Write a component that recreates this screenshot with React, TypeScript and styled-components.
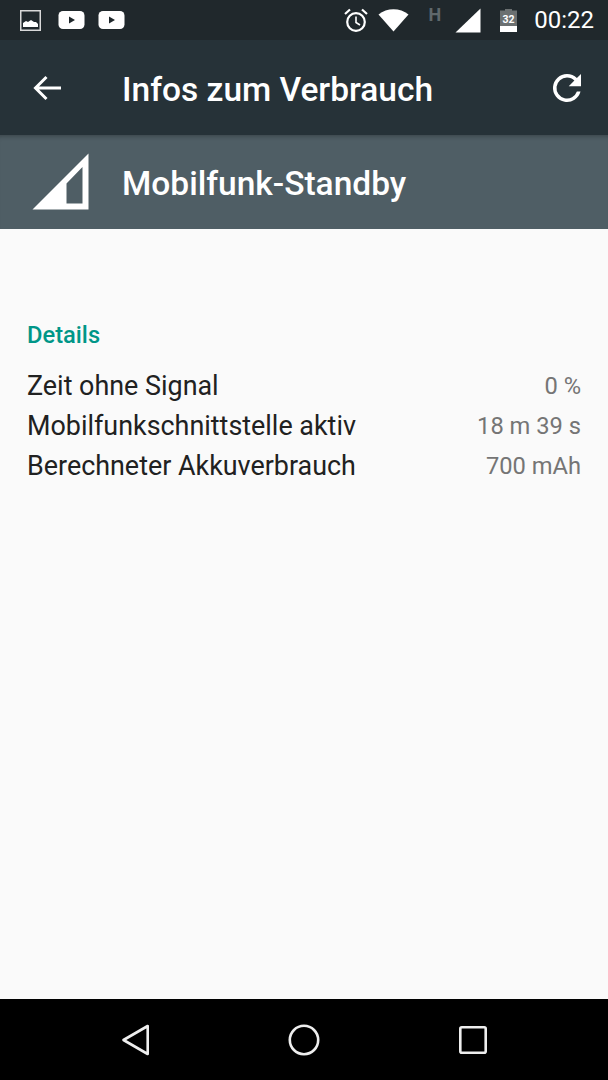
import React from "react";
import styled, { createGlobalStyle } from "styled-components";

const GlobalStyle = createGlobalStyle`
  html, body {
    margin: 0;
    padding: 0;
    background: #000;
  }
  * {
    box-sizing: border-box;
  }
`;

const Screen = styled.div`
  width: 608px;
  height: 1080px;
  display: flex;
  flex-direction: column;
  font-family: Roboto, "Liberation Sans", sans-serif;
  background: #fafafa;
  overflow: hidden;
`;

const StatusBar = styled.div`
  height: 40px;
  flex: none;
  display: flex;
  align-items: center;
  justify-content: space-between;
  padding: 0 14px 0 20px;
  background: #20282c;
`;

const StatusGroup = styled.div`
  display: flex;
  align-items: center;
`;

const StatusTime = styled.span`
  margin-left: 17px;
  font-size: 24px;
  line-height: 40px;
  color: #fff;
`;

const Toolbar = styled.div`
  height: 95px;
  flex: none;
  display: flex;
  align-items: center;
  padding: 0 20px 0 33px;
  background: #263238;
`;

const ToolbarTitle = styled.h1`
  flex: 1;
  margin: 0 0 0 60px;
  padding-top: 3px;
  font-size: 33.5px;
  font-weight: 500;
  color: #fff;
`;

const Header = styled.div`
  height: 94px;
  flex: none;
  display: flex;
  align-items: center;
  padding: 0 0 1px 32px;
  background: #4f5e65;
  box-shadow: inset 0 5px 5px -4px rgba(0, 0, 0, 0.3);
`;

const HeaderTitle = styled.h2`
  margin: 0 0 0 32px;
  padding-top: 4px;
  font-size: 33.5px;
  font-weight: 500;
  color: #fff;
`;

const Content = styled.main`
  flex: 1;
  padding: 92px 27px 0;
  background: #fafafa;
`;

const SectionTitle = styled.h3`
  margin: 0 0 17px;
  font-size: 23.7px;
  line-height: 28px;
  font-weight: 500;
  color: #009688;
`;

const Row = styled.div`
  height: 40px;
  display: flex;
  align-items: center;
  justify-content: space-between;
`;

const RowLabel = styled.span`
  font-size: 26.9px;
  color: #212121;
`;

const RowValue = styled.span`
  font-size: 23.7px;
  color: #757575;
`;

const NavBar = styled.nav`
  height: 81px;
  flex: none;
  display: flex;
  align-items: center;
  padding: 0 121px 0 122px;
  justify-content: space-between;
  background: #000;
`;

const NetworkType = styled.span`
  align-self: flex-start;
  margin: 6px 0 0 20px;
  font-size: 18px;
  line-height: 18px;
  font-weight: 700;
  color: #5f686b;
`;

const rows = [
  { label: "Zeit ohne Signal", value: "0 %" },
  { label: "Mobilfunkschnittstelle aktiv", value: "18 m 39 s" },
  { label: "Berechneter Akkuverbrauch", value: "700 mAh" },
];

const YouTubeIcon = ({ left }: { left: number }) => (
  <svg width="27" height="20" viewBox="0 0 27 20" style={{ marginLeft: left }}>
    <rect x="0.5" y="1" width="26" height="18" rx="4.5" fill="#fff" />
    <path d="M11 6.5v7l6-3.5z" fill="#20282c" />
  </svg>
);

const ImageIcon = () => (
  <svg width="21" height="21" viewBox="0 0 21 21">
    <rect x="0.75" y="0.75" width="19.5" height="19.5" fill="none" stroke="#d8d8d8" strokeWidth="1.5" />
    <path d="M3 17v-4l3-2 2 1 3-2 3 2 2 0 2 2v3z" fill="#fff" />
  </svg>
);

const AlarmIcon = () => (
  <svg width="24" height="26" viewBox="0 0 24 26">
    <circle cx="12" cy="15" r="8.8" fill="none" stroke="#fff" strokeWidth="2.2" />
    <path d="M12 9.5V15.5l4 2.5" fill="none" stroke="#fff" strokeWidth="1.6" />
    <path d="M1 7l5-4.5M23 7l-5-4.5" fill="none" stroke="#fff" strokeWidth="2.2" />
  </svg>
);

const WifiIcon = () => (
  <svg width="31" height="24" viewBox="0 0 31 24" style={{ marginLeft: 10 }}>
    <path d="M0.5 6.5C9 -0.5 22 -0.5 30.5 6.5L15.5 23.5z" fill="#fff" />
  </svg>
);

const SignalIcon = () => (
  <svg width="26" height="25" viewBox="0 0 26 25" style={{ marginLeft: 14 }}>
    <path d="M0.5 24.5L25.5 0.5V24.5z" fill="#fff" />
  </svg>
);

const BatteryIcon = () => (
  <svg width="17" height="24" viewBox="0 0 17 24" style={{ marginLeft: 19 }}>
    <path d="M5 1h7v1.5h5V24H0V2.5h5z" fill="#6b7071" />
    <path d="M0 18h17v6H0z" fill="#fff" />
    <text x="8.5" y="15" textAnchor="middle" fontSize="10.5" fontWeight="700" fontFamily="Roboto, sans-serif" fill="#fff">
      32
    </text>
  </svg>
);

export default function App() {
  return (
    <>
      <GlobalStyle />
      <Screen>
        <StatusBar>
          <StatusGroup>
            <ImageIcon />
            <YouTubeIcon left={17} />
            <YouTubeIcon left={13} />
          </StatusGroup>
          <StatusGroup>
            <AlarmIcon />
            <WifiIcon />
            <NetworkType>H</NetworkType>
            <SignalIcon />
            <BatteryIcon />
            <StatusTime>00:22</StatusTime>
          </StatusGroup>
        </StatusBar>
        <Toolbar>
          <svg width="29" height="26" viewBox="0 0 29 26">
            <path d="M28 13H3M13.5 2L2.5 13l11 11" fill="none" stroke="#fff" strokeWidth="3" />
          </svg>
          <ToolbarTitle>Infos zum Verbrauch</ToolbarTitle>
          <svg width="42" height="42" viewBox="0 0 24 24">
            <path
              d="M17.65 6.35A7.96 7.96 0 0 0 12 4a8 8 0 1 0 7.73 10h-2.08A6 6 0 1 1 12 6c1.66 0 3.14.69 4.22 1.78L13 11h7V4z"
              fill="#fff"
            />
          </svg>
        </Toolbar>
        <Header>
          <svg width="58" height="58" viewBox="0 0 58 58">
            <path fillRule="evenodd" d="M0.5 56.5L56.5 0.5V56.5zM34.5 50.5H50.5V14L34.5 30.5z" fill="#fff" />
          </svg>
          <HeaderTitle>Mobilfunk-Standby</HeaderTitle>
        </Header>
        <Content>
          <SectionTitle>Details</SectionTitle>
          {rows.map((row) => (
            <Row key={row.label}>
              <RowLabel>{row.label}</RowLabel>
              <RowValue>{row.value}</RowValue>
            </Row>
          ))}
        </Content>
        <NavBar>
          <svg width="27" height="32" viewBox="0 0 27 32">
            <path d="M1.5 16L25.7 2V30z" fill="none" stroke="#eee" strokeWidth="2.6" strokeLinejoin="round" />
          </svg>
          <svg width="32" height="32" viewBox="0 0 32 32">
            <circle cx="16" cy="16" r="14.2" fill="none" stroke="#eee" strokeWidth="2.6" />
          </svg>
          <svg width="28" height="28" viewBox="0 0 28 28">
            <rect x="1.3" y="1.3" width="25.4" height="25.4" rx="1.5" fill="none" stroke="#eee" strokeWidth="2.6" />
          </svg>
        </NavBar>
      </Screen>
    </>
  );
}
